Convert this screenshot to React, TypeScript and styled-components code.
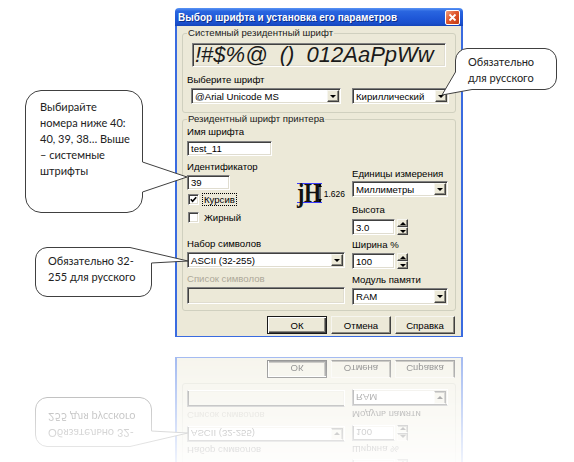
import React from "react";
import styled, { createGlobalStyle, css } from "styled-components";

const GlobalStyle = createGlobalStyle`
  html, body {
    margin: 0;
    padding: 0;
    background: #fff;
    overflow: hidden;
  }
  body {
    font-family: "Liberation Sans", Arial, sans-serif;
  }
`;

const Page = styled.div`
  width: 574px;
  height: 462px;
  overflow: hidden;
  background: #fff;
`;

const SceneBox = styled.div`
  position: relative;
  width: 574px;
  height: 347px;
  box-sizing: border-box;
  padding: 8px 0 0 175px;
`;

const Reflection = styled.div`
  height: 115px;
  overflow: hidden;
  pointer-events: none;
  -webkit-mask-image: linear-gradient(to bottom, rgba(0, 0, 0, 0.5), rgba(0, 0, 0, 0.08));
  mask-image: linear-gradient(to bottom, rgba(0, 0, 0, 0.5), rgba(0, 0, 0, 0.08));
`;

const Flipped = styled.div`
  transform: scaleY(-1);
`;

// ---- window chrome ----

const Window = styled.div`
  width: 288px;
  display: flex;
  flex-direction: column;
  font-size: 9.6px;
  color: #000;
`;

const TitleBar = styled.div`
  height: 18px;
  display: flex;
  align-items: center;
  justify-content: space-between;
  padding: 0 3px;
  border-radius: 4px 4px 0 0;
  background: linear-gradient(to bottom, #5a95f5 0%, #2a66e0 18%, #1f58d8 55%, #1a4fcc 85%, #1444b8 100%);
`;

const TitleText = styled.span`
  color: #fff;
  font-weight: bold;
  font-size: 10px;
  text-shadow: 1px 1px 0 #0c2f8a;
  white-space: nowrap;
`;

const CloseButton = styled.div`
  width: 15px;
  height: 15px;
  box-sizing: border-box;
  border: 1px solid #fff;
  border-radius: 2px;
  background: linear-gradient(135deg, #f2a07e 0%, #e0572c 45%, #c43a12 100%);
  display: flex;
  align-items: center;
  justify-content: center;
`;

const Body = styled.div`
  background: #ece9d8;
  border: 2px solid #3a6be0;
  border-top: none;
  border-bottom-width: 1px;
  padding: 1px 5px 2px;
`;

// ---- groups ----

const Group = styled.fieldset<{ $padBottom: number }>`
  margin: 0;
  min-inline-size: 0;
  border: 1px solid #d0d0bf;
  border-radius: 3px;
  padding: 0 6px ${(p) => p.$padBottom}px 4px;
`;

const GroupTitle = styled.legend`
  padding: 0 1px;
  font-size: 9.6px;
  line-height: 12px;
  color: #1a1a1a;
`;

const Label = styled.div<{ $top?: number; $disabled?: boolean }>`
  margin-top: ${(p) => p.$top ?? 0}px;
  height: 12px;
  line-height: 12px;
  white-space: nowrap;
  color: ${(p) => (p.$disabled ? "#aca899" : "#000")};
`;

const sunken = css`
  border: 1px solid;
  border-color: #808080 #fff #fff #808080;
  box-shadow: inset 1px 1px 0 #404040, inset -1px -1px 0 #e0ddd0;
`;

const raised = css`
  background: #ece9d8;
  border: 1px solid;
  border-color: #f6f5ef #404040 #404040 #f6f5ef;
  box-shadow: inset -1px -1px 0 #8c8a80;
`;

const SampleBox = styled.div`
  ${sunken};
  margin: 4px 3px 0 5px;
  height: 24px;
  box-sizing: border-box;
  padding-left: 2px;
  display: flex;
  align-items: center;
  background: #ece9d8;
  font-family: "Liberation Sans", Arial, sans-serif;
  font-style: italic;
  font-size: 22px;
  color: #1a1a1a;
  white-space: pre;
  overflow: hidden;
`;

const Field = styled.div<{ $w: number; $h: number; $top?: number; $disabled?: boolean }>`
  ${sunken};
  width: ${(p) => p.$w}px;
  height: ${(p) => p.$h}px;
  margin-top: ${(p) => p.$top ?? 0}px;
  box-sizing: border-box;
  background: ${(p) => (p.$disabled ? "#ece9d8" : "#fff")};
  display: flex;
  align-items: center;
  padding: 1px 1px 1px 3px;
  white-space: nowrap;
  overflow: hidden;
`;

const DropButton = styled.div`
  ${raised};
  margin-left: auto;
  width: 12px;
  align-self: stretch;
  box-sizing: border-box;
  display: flex;
  align-items: center;
  justify-content: center;
`;

const Arrow = styled.div<{ $up?: boolean }>`
  width: 0;
  height: 0;
  border-left: 3px solid transparent;
  border-right: 3px solid transparent;
  ${(p) =>
    p.$up
      ? css`
          border-bottom: 3px solid #000;
        `
      : css`
          border-top: 3px solid #000;
        `}
`;

const Row = styled.div<{ $top?: number }>`
  display: flex;
  align-items: center;
  justify-content: space-between;
  margin-top: ${(p) => p.$top ?? 0}px;
`;

const Indent = styled.div<{ $left: number }>`
  margin-left: ${(p) => p.$left}px;
`;

const Columns = styled.div`
  display: flex;
  gap: 7px;
  margin-top: 1px;
`;

const Column = styled.div<{ $w: number; $top?: number }>`
  width: ${(p) => p.$w}px;
  margin-top: ${(p) => p.$top ?? 0}px;
  display: flex;
  flex-direction: column;
`;

const IdBlock = styled.div`
  display: flex;
`;

const IdStack = styled.div`
  width: 111px;
  display: flex;
  flex-direction: column;
`;

const CheckRow = styled.div<{ $top: number }>`
  display: flex;
  align-items: center;
  gap: 3px;
  height: 12px;
  margin-top: ${(p) => p.$top}px;
  padding-left: 1px;
`;

const CheckBox = styled.div`
  ${sunken};
  width: 11px;
  height: 11px;
  box-sizing: border-box;
  background: #fff;
  display: flex;
  align-items: center;
  justify-content: center;
`;

const CheckText = styled.span<{ $focused?: boolean }>`
  border: 1px dotted ${(p) => (p.$focused ? "#000" : "transparent")};
  padding: 0 1px;
  line-height: 11px;
`;

const Preview = styled.div`
  position: relative;
  display: flex;
  align-items: center;
  margin-top: 27px;
  align-self: flex-start;
`;

const Glyphs = styled.div`
  width: 25px;
  height: 18px;
  border-top: 1px solid #3a3aff;
  border-bottom: 1px solid #3a3aff;
  font-family: "Liberation Serif", "Times New Roman", serif;
  font-weight: bold;
  font-size: 27px;
  line-height: 18px;
  color: #111;
  white-space: nowrap;
  overflow: visible;
`;

const GlyphText = styled.span`
  display: inline-block;
  transform: scaleX(0.82);
  transform-origin: left center;
  letter-spacing: -0.5px;
`;

const MeasureArrow = styled.svg`
  position: absolute;
  left: 21px;
  top: 0;
`;

const MeasureValue = styled.span`
  font-size: 8.5px;
  margin-left: 2px;
  margin-top: 2px;
`;

const SpinRow = styled.div<{ $top: number }>`
  display: flex;
  align-items: stretch;
  gap: 2px;
  margin-top: ${(p) => p.$top}px;
  height: 16px;
`;

const SpinButtons = styled.div`
  width: 11px;
  display: flex;
  flex-direction: column;
`;

const SpinButton = styled.div`
  ${raised};
  flex: 1;
  box-sizing: border-box;
  display: flex;
  align-items: center;
  justify-content: center;
`;

const ButtonRow = styled.div`
  display: flex;
  justify-content: flex-end;
  gap: 4px;
  margin: 5px 1px 0 0;
`;

const Button = styled.div<{ $default?: boolean }>`
  width: 60px;
  height: 18px;
  box-sizing: border-box;
  display: flex;
  align-items: center;
  justify-content: center;
  ${raised};
  ${(p) =>
    p.$default &&
    css`
      border: 1px solid #1a1a1a;
      box-shadow: inset 1px 1px 0 #fff, inset -1px -1px 0 #404040, inset -2px -2px 0 #8c8a80;
    `}
`;

// ---- callouts ----

const CalloutBox = styled.div<{ $x: number; $y: number; $w: number; $h: number }>`
  position: absolute;
  left: ${(p) => p.$x}px;
  top: ${(p) => p.$y}px;
  width: ${(p) => p.$w}px;
  height: ${(p) => p.$h}px;
  font-family: Lato, "Open Sans", sans-serif;
  font-size: 11px;
  line-height: 16px;
  color: #222;
`;

const CalloutShape = styled.svg`
  position: absolute;
  left: 0;
  top: 0;
  overflow: visible;
`;

const CalloutText = styled.div<{ $padTop: number; $padLeft: number }>`
  position: relative;
  padding: ${(p) => p.$padTop}px 0 0 ${(p) => p.$padLeft}px;
  white-space: nowrap;
`;

type CalloutProps = {
  x: number;
  y: number;
  w: number;
  h: number;
  d: string;
  padTop: number;
  padLeft: number;
  children: React.ReactNode;
};

const Callout = ({ x, y, w, h, d, padTop, padLeft, children }: CalloutProps) => (
  <CalloutBox $x={x} $y={y} $w={w} $h={h}>
    <CalloutShape width={w} height={h}>
      <path d={d} fill="#fff" stroke="#404040" strokeWidth="1" />
    </CalloutShape>
    <CalloutText $padTop={padTop} $padLeft={padLeft}>
      {children}
    </CalloutText>
  </CalloutBox>
);

const Combo = ({ w, h, top, children }: { w: number; h: number; top?: number; children?: React.ReactNode }) => (
  <Field $w={w} $h={h} $top={top}>
    <span>{children}</span>
    <DropButton>
      <Arrow />
    </DropButton>
  </Field>
);

const Spin = ({ top, value }: { top: number; value: string }) => (
  <SpinRow $top={top}>
    <Field $w={43} $h={16}>
      {value}
    </Field>
    <SpinButtons>
      <SpinButton>
        <Arrow $up />
      </SpinButton>
      <SpinButton>
        <Arrow />
      </SpinButton>
    </SpinButtons>
  </SpinRow>
);

const Dialog = () => (
  <Window>
    <TitleBar>
      <TitleText>Выбор шрифта и установка его параметров</TitleText>
      <CloseButton>
        <svg width="9" height="9" viewBox="0 0 9 9">
          <path d="M1.5 1.5 L7.5 7.5 M7.5 1.5 L1.5 7.5" stroke="#fff" strokeWidth="1.8" />
        </svg>
      </CloseButton>
    </TitleBar>
    <Body>
      <Group $padBottom={8}>
        <GroupTitle>Системный резидентный шрифт</GroupTitle>
        <SampleBox>{"!#$%@  ()  012AaPpWw"}</SampleBox>
        <Label $top={7}>Выберите шрифт</Label>
        <Row $top={2}>
          <Indent $left={4}>
            <Combo w={150} h={16}>@Arial Unicode MS</Combo>
          </Indent>
          <Combo w={97} h={16}>Кириллический</Combo>
        </Row>
      </Group>

      <Group $padBottom={5}>
        <GroupTitle>Резидентный шрифт принтера</GroupTitle>
        <Columns>
          <Column $w={158}>
            <Label>Имя шрифта</Label>
            <Field $w={85} $h={15} $top={3}>
              test_11
            </Field>
            <IdBlock>
              <IdStack>
                <Label $top={5}>Идентификатор</Label>
                <Field $w={43} $h={15} $top={2}>
                  39
                </Field>
                <CheckRow $top={3}>
                  <CheckBox>
                    <svg width="7" height="7" viewBox="0 0 7 7">
                      <path d="M0.8 3.2 L2.6 5.2 L6.2 1.2" fill="none" stroke="#000" strokeWidth="1.6" />
                    </svg>
                  </CheckBox>
                  <CheckText $focused>Курсив</CheckText>
                </CheckRow>
                <CheckRow $top={6}>
                  <CheckBox />
                  <CheckText>Жирный</CheckText>
                </CheckRow>
              </IdStack>
              <Preview>
                <Glyphs>
                  <GlyphText>jH</GlyphText>
                </Glyphs>
                <MeasureArrow width="4" height="20" viewBox="0 0 4 20">
                  <path d="M2 1 V19" stroke="#000" strokeWidth="1" />
                  <path d="M0 4 L2 0.5 L4 4 Z M0 16 L2 19.5 L4 16 Z" fill="#000" />
                </MeasureArrow>
                <MeasureValue>1.626</MeasureValue>
              </Preview>
            </IdBlock>
            <Label $top={15}>Набор символов</Label>
            <Combo w={158} h={16} top={2}>
              ASCII (32-255)
            </Combo>
            <Label $top={5} $disabled>
              Список символов
            </Label>
            <Field $w={158} $h={17} $top={2} $disabled />
          </Column>

          <Column $w={96} $top={42}>
            <Label>Единицы измерения</Label>
            <Combo w={96} h={16} top={1}>
              Миллиметры
            </Combo>
            <Label $top={7}>Высота</Label>
            <Spin top={3} value="3.0" />
            <Label $top={4}>Ширина %</Label>
            <Spin top={2} value="100" />
            <Label $top={5}>Модуль памяти</Label>
            <Combo w={96} h={17} top={2}>
              RAM
            </Combo>
          </Column>
        </Columns>
      </Group>

      <ButtonRow>
        <Button $default>ОК</Button>
        <Button>Отмена</Button>
        <Button>Справка</Button>
      </ButtonRow>
    </Body>
  </Window>
);

const Scene = () => (
  <SceneBox>
    <Dialog />
    <Callout
      x={25}
      y={90}
      w={118}
      h={123}
      padTop={9}
      padLeft={15}
      d="M16,0.5 H102 A16,16 0 0 1 117.5,16 V72 L162,87 L117.5,102 V107 A16,16 0 0 1 102,122.5 H16 A16,16 0 0 1 0.5,107 V16 A16,16 0 0 1 16,0.5 Z"
    >
      Выбирайте
      <br />
      номера ниже 40:
      <br />
      40, 39, 38… Выше
      <br />– системные
      <br />
      штрифты
    </Callout>
    <Callout
      x={35}
      y={247}
      w={117}
      h={50}
      padTop={6}
      padLeft={13}
      d="M12,0.5 H95 L153,14 L116.5,16 V38 A12,12 0 0 1 105,49.5 H12 A12,12 0 0 1 0.5,38 V12 A12,12 0 0 1 12,0.5 Z"
    >
      Обязательно 32-
      <br />
      255 для русского
    </Callout>
    <Callout
      x={455}
      y={48}
      w={102}
      h={42}
      padTop={6}
      padLeft={13}
      d="M12,0.5 H90 A12,12 0 0 1 101.5,12 V30 A12,12 0 0 1 90,41.5 H17 L-13,47 L0.5,24 V12 A12,12 0 0 1 12,0.5 Z"
    >
      Обязательно
      <br />
      для русского
    </Callout>
  </SceneBox>
);

export default function App() {
  return (
    <Page>
      <GlobalStyle />
      <Scene />
      <Reflection aria-hidden>
        <Flipped>
          <Scene />
        </Flipped>
      </Reflection>
    </Page>
  );
}
